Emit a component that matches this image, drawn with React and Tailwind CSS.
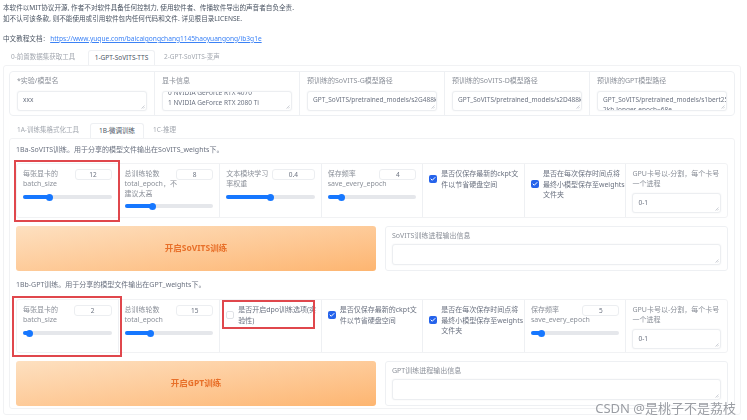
import React from 'react';
import { Check } from 'lucide-react';

const font = { fontFamily: '"Noto Sans", "Noto Sans CJK SC", sans-serif' };

const Handle = () => (
  <svg className="absolute right-[1px] bottom-[1px] w-[4px] h-[4px]" viewBox="0 0 4 4">
    <path d="M0.5 3.5L3.5 0.5M2.2 3.5L3.5 2.2" stroke="#9ca3af" strokeWidth="0.5" />
  </svg>
);

const TextBox = ({ children, className = '' }) => (
  <div className={`relative overflow-hidden bg-white border border-[#eceef1] rounded-[3px] shadow-[0_0_2px_#f1f2f4] text-[6.5px] leading-[10px] text-[#6b7280] ${className}`}>
    {children}
    <Handle />
  </div>
);

const ModelCell = ({ label, last, children }) => (
  <div className={`flex-1 min-w-0 px-[7px] pt-[4px] ${last ? '' : 'border-r border-[#eef0f3]'}`}>
    <div className="text-[7px] leading-[10px] text-[#8b9099] mb-[5px] whitespace-nowrap">{label}</div>
    <TextBox className="h-[20px] px-[5px] pt-[3px]">{children}</TextBox>
  </div>
);

const SliderCell = ({ label, value, pct, inputW, gap }) => (
  <div className="flex-1 min-w-0 px-[6px] pt-[5px] border-r border-[#eef0f3]">
    <div className="flex items-start justify-between">
      <div className="text-[7px] leading-[10px] text-[#8b9099] w-[46px]">
        {label.map((l) => <div key={l} className="whitespace-nowrap">{l}</div>)}
      </div>
      <div className={`${inputW} h-[11px] bg-white border border-[#eceef1] rounded-[3px] text-center text-[6.5px] leading-[9px] text-[#6b7280]`}>{value}</div>
    </div>
    <div className={`relative h-[4px] bg-[#e5e7eb] rounded-full ${gap}`}>
      <div className="h-full bg-[#1677ff] rounded-full" style={{ width: `${pct}%` }} />
      <div className="absolute top-[-1.5px] w-[7px] h-[7px] ml-[-3.5px] bg-[#1677ff] rounded-full" style={{ left: `${pct}%` }} />
    </div>
  </div>
);

const CheckCell = ({ lines, checked = true }) => (
  <div className="flex-1 min-w-0 px-[6px] pt-[5px] flex items-start gap-[4px] border-r border-[#eef0f3]">
    <div className={`shrink-0 w-[8px] h-[8px] rounded-[2px] flex items-center justify-center ${lines.length > 2 ? 'mt-[11px]' : 'mt-[6px]'} ${checked ? 'bg-[#2563eb]' : 'bg-white border border-[#e0e2e6]'}`}>
      {checked && <Check className="w-[6px] h-[6px] text-white" strokeWidth={4} />}
    </div>
    <div className="text-[7px] leading-[10.5px] text-[#6b7280]">
      {lines.map((l) => <div key={l} className="whitespace-nowrap">{l}</div>)}
    </div>
  </div>
);

const GpuCell = () => (
  <div className="flex-1 min-w-0 px-[6px] pt-[5px]">
    <div className="text-[7px] leading-[10px] text-[#8b9099] whitespace-nowrap">GPU卡号以-分割，每个卡号</div>
    <div className="text-[7px] leading-[10px] text-[#8b9099] mb-[4px]">一个进程</div>
    <TextBox className="h-[20px] px-[5px] pt-[4px]">0-1</TextBox>
  </div>
);

const RedBox = ({ className }) => (
  <div className={`absolute border-2 border-[#e0474c] pointer-events-none ${className}`} />
);

const TrainButton = ({ label, outLabel }) => (
  <div className="flex gap-[9px] mt-[8px] h-[45px]">
    <button className="w-[360px] rounded-[3px] bg-gradient-to-br from-[#fde0c0] to-[#fdb570] text-[8.5px] font-bold text-[#e8702a]">
      {label}
    </button>
    <div className="flex-1 border border-[#eef0f3] rounded-[3px] px-[6px] pt-[4px]">
      <div className="text-[7px] leading-[10px] text-[#8b9099] mb-[3px]">{outLabel}</div>
      <TextBox className="h-[21px]" />
    </div>
  </div>
);

export default function App() {
  return (
    <div className="relative w-[747px] h-[420px] overflow-hidden bg-white" style={font}>
      <div className="blur-[0.35px]">
        {/* Notice */}
        <div className="pl-[3px] pt-[2px] text-[6.6px] leading-[11px] text-[#4b5563]">
          <p className="whitespace-nowrap">本软件以MIT协议开源, 作者不对软件具备任何控制力, 使用软件者、传播软件导出的声音者自负全责.</p>
          <p className="whitespace-nowrap">如不认可该条款, 则不能使用或引用软件包内任何代码和文件. 详见根目录LICENSE.</p>
          <p className="whitespace-nowrap mt-[9px]">
            中文教程文档：<a className="ml-[1px] text-[#3b82f6] underline">https://www.yuque.com/baicaigongchang1145haoyuangong/ib3g1e</a>
          </p>
        </div>

        {/* Top tabs */}
        <div className="flex ml-[3px] mt-[6px] h-[15px] text-[6.5px] leading-[14px] text-[#a3a8b0]">
          <div className="w-[85px] pl-[8px]">0-前置数据集获取工具</div>
          <div className="w-[67px] text-center text-[#4b5563] bg-white border border-b-0 border-[#eef0f3] rounded-t-[3px] relative z-10 h-[15px]">1-GPT-SoVITS-TTS</div>
          <div className="pl-[9px]">2-GPT-SoVITS-变声</div>
        </div>

        {/* Outer panel */}
        <div className="ml-[3px] w-[738px] h-[350px] border border-[#f1f2f4] rounded-[3px] px-[5px] pt-[5px]">
          <div className="flex w-[726px] h-[45px] border border-[#eef0f3] rounded-[4px]">
            <ModelCell label="*实验/模型名">xxx</ModelCell>
            <ModelCell label="显卡信息">
              <div className="mt-[-7px] whitespace-nowrap">0 NVIDIA GeForce RTX 4070</div>
              <div className="whitespace-nowrap">1 NVIDIA GeForce RTX 2080 Ti</div>
            </ModelCell>
            <ModelCell label="预训练的SoVITS-G模型路径">GPT_SoVITS/pretrained_models/s2G488k.pth</ModelCell>
            <ModelCell label="预训练的SoVITS-D模型路径">GPT_SoVITS/pretrained_models/s2D488k.pth</ModelCell>
            <ModelCell label="预训练的GPT模型路径" last>GPT_SoVITS/pretrained_models/s1bert25hz-2kh-longer-epoch=68e-</ModelCell>
          </div>

          {/* Sub tabs */}
          <div className="flex mt-[7px] h-[15px] text-[6.5px] leading-[14px] text-[#a3a8b0]">
            <div className="w-[81px] pl-[8px]">1A-训练集格式化工具</div>
            <div className="w-[54px] text-center text-[#4b5563] bg-white border border-b-0 border-[#eef0f3] rounded-t-[3px] relative z-10 h-[15px]">1B-微调训练</div>
            <div className="pl-[9px]">1C-推理</div>
          </div>

          {/* Inner panel */}
          <div className="w-[726px] h-[271px] border border-[#f1f2f4] rounded-[3px] px-[6px]">
            <div className="mt-[5px] h-[12px] text-[7px] leading-[12px] text-[#6b7280] whitespace-nowrap">1Ba-SoVITS训练。用于分享的模型文件输出在SoVITS_weights下。</div>

            <div className="relative flex w-[712px] h-[55px] mt-[7px] border border-[#f1f2f4] rounded-[3px]">
              <SliderCell label={['每张显卡的', 'batch_size']} value="12" pct={30} inputW="w-[37px]" gap="mt-[6px]" />
              <SliderCell label={['总训练轮数', 'total_epoch，不', '建议太高']} value="8" pct={31} inputW="w-[37px]" gap="mt-[5px]" />
              <SliderCell label={['文本模块学习', '率权重']} value="0.4" pct={50} inputW="w-[43px]" gap="mt-[6px]" />
              <SliderCell label={['保存频率', 'save_every_epoch']} value="4" pct={15} inputW="w-[37px]" gap="mt-[6px]" />
              <CheckCell lines={['是否仅保存最新的ckpt文', '件以节省硬盘空间']} />
              <CheckCell lines={['是否在每次保存时间点将', '最终小模型保存至weights', '文件夹']} />
              <GpuCell />
              <RedBox className="left-[-3px] top-[-4px] w-[106px] h-[62px]" />
            </div>
            <TrainButton label="开启SoVITS训练" outLabel="SoVITS训练进程输出信息" />

            <div className="mt-[8px] h-[12px] text-[7px] leading-[12px] text-[#6b7280] whitespace-nowrap">1Bb-GPT训练。用于分享的模型文件输出在GPT_weights下。</div>

            <div className="relative flex w-[712px] h-[54px] mt-[8px] border border-[#f1f2f4] rounded-[3px]">
              <SliderCell label={['每张显卡的', 'batch_size']} value="2" pct={7} inputW="w-[38px]" gap="mt-[6px]" />
              <SliderCell label={['总训练轮数', 'total_epoch']} value="15" pct={29} inputW="w-[37px]" gap="mt-[6px]" />
              <CheckCell checked={false} lines={['是否开启dpo训练选项(实', '验性)']} />
              <CheckCell lines={['是否仅保存最新的ckpt文', '件以节省硬盘空间']} />
              <CheckCell lines={['是否在每次保存时间点将', '最终小模型保存至weights', '文件夹']} />
              <SliderCell label={['保存频率', 'save_every_epoch']} value="5" pct={12} inputW="w-[37px]" gap="mt-[6px]" />
              <GpuCell />
              <RedBox className="left-[-5px] top-[-4px] w-[110px] h-[61px]" />
              <RedBox className="left-[205px] top-[0px] w-[93px] h-[29px]" />
            </div>
            <TrainButton label="开启GPT训练" outLabel="GPT训练进程输出信息" />
          </div>
        </div>
      </div>

      {/* Watermark */}
      <div className="absolute right-[11px] bottom-[4px] text-[13px] leading-[16px] text-[#9a9da3] [text-shadow:0_0_2px_#ffffff] whitespace-nowrap">
        CSDN @是桃子不是荔枝
      </div>
    </div>
  );
}
